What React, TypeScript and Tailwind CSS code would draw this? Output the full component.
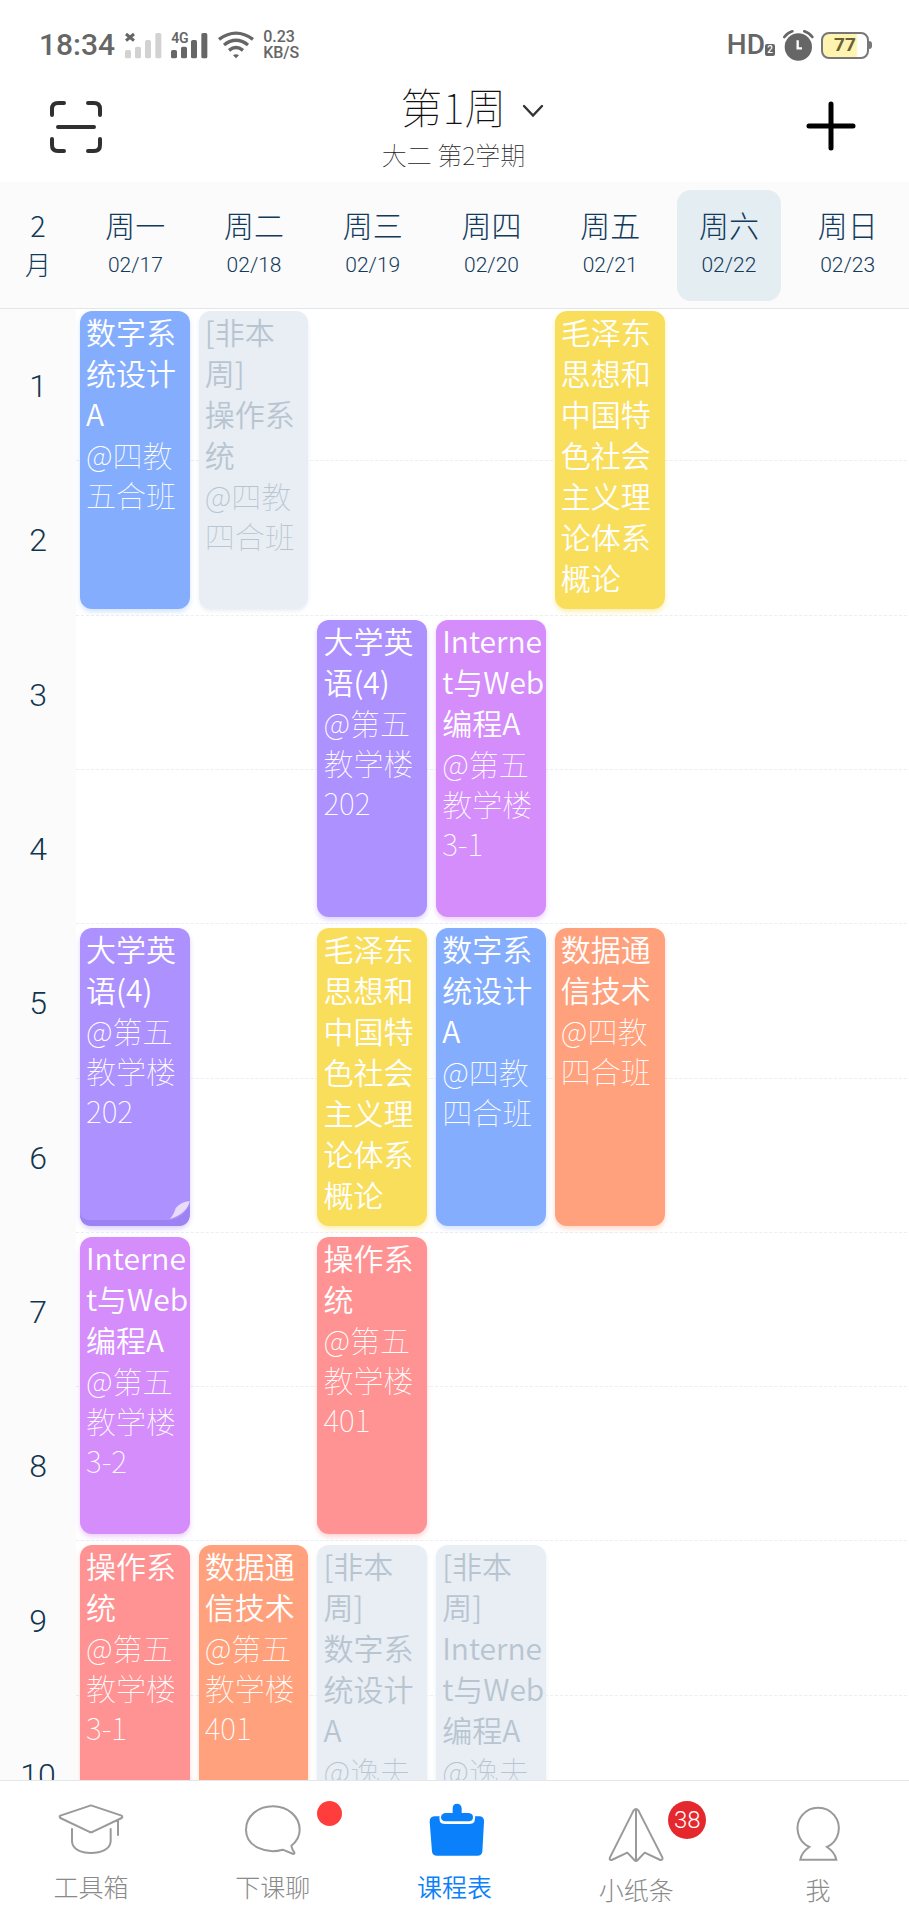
import React from "react";

type Course = {
  day: number;
  start: number;
  title: string;
  place: string;
  tone: keyof typeof tones;
  folded?: boolean;
};

const tones = {
  blue: "bg-[#84adfd] text-white shadow-[0_3px_5px_#84adfd55]",
  yellow: "bg-[#f9de5c] text-white shadow-[0_3px_5px_#f9de5c77]",
  violet: "bg-[#ac91ff] text-white shadow-[0_3px_5px_#ac91ff66]",
  pink: "bg-[#d48dfb] text-white shadow-[0_3px_5px_#d48dfb66]",
  orange: "bg-[#ffa17c] text-white shadow-[0_3px_5px_#ffa17c66]",
  red: "bg-[#ff9293] text-white shadow-[0_3px_5px_#ff929366]",
  muted: "bg-[#e8eef4] text-[#b8c5d1] shadow-[0_2px_4px_#e8eef4]",
};

const columns = ["col-start-2", "col-start-3", "col-start-4", "col-start-5", "col-start-6", "col-start-7", "col-start-8"];
const rows = [
  "row-start-1",
  "row-start-2",
  "row-start-3",
  "row-start-4",
  "row-start-5",
  "row-start-6",
  "row-start-7",
  "row-start-8",
  "row-start-9",
  "row-start-10",
];

const mao = "毛泽东\n思想和\n中国特\n色社会\n主义理\n论体系\n概论";

const courses: Course[] = [
  { day: 0, start: 0, title: "数字系\n统设计\nA", place: "@四教\n五合班", tone: "blue" },
  { day: 1, start: 0, title: "[非本\n周]\n操作系\n统", place: "@四教\n四合班", tone: "muted" },
  { day: 4, start: 0, title: mao, place: "", tone: "yellow" },
  { day: 2, start: 2, title: "大学英\n语(4)", place: "@第五\n教学楼\n202", tone: "violet" },
  { day: 3, start: 2, title: "Interne\nt与Web\n编程A", place: "@第五\n教学楼\n3-1", tone: "pink" },
  { day: 0, start: 4, title: "大学英\n语(4)", place: "@第五\n教学楼\n202", tone: "violet", folded: true },
  { day: 2, start: 4, title: mao, place: "", tone: "yellow" },
  { day: 3, start: 4, title: "数字系\n统设计\nA", place: "@四教\n四合班", tone: "blue" },
  { day: 4, start: 4, title: "数据通\n信技术", place: "@四教\n四合班", tone: "orange" },
  { day: 0, start: 6, title: "Interne\nt与Web\n编程A", place: "@第五\n教学楼\n3-2", tone: "pink" },
  { day: 2, start: 6, title: "操作系\n统", place: "@第五\n教学楼\n401", tone: "red" },
  { day: 0, start: 8, title: "操作系\n统", place: "@第五\n教学楼\n3-1", tone: "red" },
  { day: 1, start: 8, title: "数据通\n信技术", place: "@第五\n教学楼\n401", tone: "orange" },
  { day: 2, start: 8, title: "[非本\n周]\n数字系\n统设计\nA", place: "@逸夫", tone: "muted" },
  { day: 3, start: 8, title: "[非本\n周]\nInterne\nt与Web\n编程A", place: "@逸夫", tone: "muted" },
];

const days = [
  ["周一", "02/17"],
  ["周二", "02/18"],
  ["周三", "02/19"],
  ["周四", "02/20"],
  ["周五", "02/21"],
  ["周六", "02/22"],
  ["周日", "02/23"],
];

function StatusBar() {
  return (
    <div className="flex h-[76px] shrink-0 items-end justify-between pr-[37px] pb-[13px] pl-[39px] font-['Roboto',sans-serif] font-medium text-[#666]">
      <div className="flex h-9 items-center">
        <span className="text-[30px] leading-9">18:34</span>
        <svg className="ml-[10px]" width="37" height="27" viewBox="0 0 111 81" aria-hidden="true">
          <path d="M3 6l24 20M27 6L3 26" stroke="#666" strokeWidth="9" />
          <g fill="#d2d2d2">
            <rect x="0" y="54" width="18" height="25" rx="5" />
            <rect x="30" y="44" width="18" height="35" rx="5" />
            <rect x="60" y="24" width="18" height="55" rx="5" />
            <rect x="91" y="3" width="18" height="76" rx="5" />
          </g>
        </svg>
        <div className="relative ml-[9px]">
          <svg width="37" height="27" viewBox="0 0 111 81" fill="#666" aria-hidden="true">
            <rect x="0" y="54" width="18" height="25" rx="5" />
            <rect x="30" y="44" width="18" height="35" rx="5" />
            <rect x="60" y="24" width="18" height="55" rx="5" />
            <rect x="91" y="3" width="18" height="76" rx="5" />
          </svg>
          <span className="absolute top-0 left-0 text-[14px] leading-3 font-semibold">4G</span>
        </div>
        <svg className="ml-[10px]" width="36" height="28" viewBox="0 0 108 84" fill="none" stroke="#666" strokeWidth="10" aria-hidden="true">
          <path d="M3 25Q54-12 105 25M18 42Q54 14 90 42M33 58Q54 41 75 58" />
          <path d="M45 73Q54 66 63 73L54 82Z" fill="#666" stroke="none" />
        </svg>
        <div className="ml-[9px] text-[16px] leading-4">
          <div>0.23</div>
          <div>KB/S</div>
        </div>
      </div>
      <div className="flex h-9 items-center">
        <span className="text-[28px] leading-9">HD</span>
        <span className="mt-[10px] flex h-3 w-[10px] items-center justify-center rounded-[2px] bg-[#666] text-[10px] leading-3 text-white">2</span>
        <svg className="ml-2" width="31" height="31" viewBox="0 0 93 93" aria-hidden="true">
          <circle cx="46" cy="51" r="41" fill="#666" />
          <path d="M4 21Q14 8 28 4M64 4Q78 8 88 21" stroke="#666" strokeWidth="8" fill="none" strokeLinecap="round" />
          <path d="M44 31V55H57" stroke="#fff" strokeWidth="7" fill="none" />
        </svg>
        <div className="ml-[7px] flex h-[27px] w-12 items-center justify-center rounded-[8px] border-2 border-[#777] bg-linear-to-r from-[#fff3b0] from-75% to-white to-80% text-[19px] leading-6 font-bold text-[#66603c]">
          77
        </div>
        <div className="h-2 w-[3px] rounded-r bg-[#777]" />
      </div>
    </div>
  );
}

function Toolbar() {
  return (
    <header className="flex h-[106px] shrink-0 items-center justify-between pr-[50px] pb-[6px] pl-[48px]">
      <button type="button" aria-label="扫一扫" className="w-[56px]">
        <svg width="54" height="54" viewBox="0 0 54 54" fill="none" stroke="#303030" strokeWidth="4" strokeLinecap="round" strokeLinejoin="round" aria-hidden="true">
          <path d="M4 16V10Q4 4 10 4H16M40 4H46Q52 4 52 10V16M4 40V46Q4 52 10 52H16M40 52H46Q52 52 52 46V40M10 28H46" />
        </svg>
      </button>
      <div className="flex flex-col items-center">
        <button type="button" className="flex items-center pl-[38px] text-[42px] leading-[56px] font-thin text-[#111]">
          第1周
          <svg className="mt-[9px] ml-[16px]" width="22" height="14" viewBox="0 0 22 14" fill="none" stroke="#333" strokeWidth="2.4" strokeLinecap="round" aria-hidden="true">
            <path d="M2 2L11 11.500L20 2" />
          </svg>
        </button>
        <div className="text-[25px] leading-10 font-thin whitespace-pre text-[#222]">大二 第2学期</div>
      </div>
      <button type="button" aria-label="添加" className="flex w-[56px] justify-end">
        <svg width="54" height="54" viewBox="0 0 54 54" stroke="#000" strokeWidth="5" strokeLinecap="round" aria-hidden="true">
          <path d="M26 5V49M4 27H48" />
        </svg>
      </button>
    </header>
  );
}

function WeekHeader() {
  return (
    <div className="grid h-[127px] shrink-0 grid-cols-[76px_repeat(7,minmax(0,1fr))] border-b border-[#e3e6e8] bg-[#fbfbfc] pt-2 pr-0.5 pb-[7px] text-center font-light text-[#123a5a]">
      <div className="flex flex-col pt-[14px]">
        <span className="text-[29px] leading-10">2</span>
        <span className="text-[26px] leading-10">月</span>
      </div>
      {days.map(([name, date], i) => (
        <div key={date} className={i === 5 ? "mx-[7px] flex flex-col rounded-[14px] bg-[#e4edf2] pt-[14px]" : "mx-[7px] flex flex-col pt-[14px]"}>
          <span className="text-[30px] leading-10">{name}</span>
          <span className="font-['Roboto',sans-serif] text-[21px] leading-[42px] font-light">{date}</span>
        </div>
      ))}
    </div>
  );
}

function CourseCard({ course }: { course: Course }) {
  return (
    <div className={`${columns[course.day]} ${rows[course.start]} row-span-2 pt-[2px] pr-[5px] pb-[9px] pl-1`}>
      <article className={`relative h-full rounded-[12px] pl-[6px] text-[30px] whitespace-pre ${tones[course.tone]}`}>
        <h2 className="leading-[41px] font-[350]">{course.title}</h2>
        <p className="leading-10 font-thin">{course.place}</p>
        {course.folded && (
          <svg className="absolute bottom-0 left-0 w-full" height="26" viewBox="0 0 110 26" preserveAspectRatio="none" aria-hidden="true">
            <path d="M0 14Q2 20 11 20H90Q104 18 110 4V14Q110 26 98 26H12Q0 26 0 14Z" fill="#9c82f3" />
            <path d="M90 19Q94 15 96 8Q101 2 110 1Q108 13 90 19Z" fill="#e9dcfb" />
          </svg>
        )}
      </article>
    </div>
  );
}

function Timetable() {
  return (
    <main className="min-h-0 flex-1 overflow-y-auto [scrollbar-width:none]">
      <div className="grid h-[1543px] grid-cols-[76px_repeat(7,minmax(0,1fr))] grid-rows-10 pr-0.5">
        {rows.map((row, i) => (
          <React.Fragment key={row}>
            <div className={`${row} col-start-1 flex items-center justify-center bg-[#fbfbfc] font-['Roboto',sans-serif] text-[32px] font-light text-[#12354e]`}>{i + 1}</div>
            <div className={`${row} col-span-7 col-start-2 pb-[2px]`}>
              <div className="h-full border-b border-dashed border-[#e9eff2]" />
            </div>
          </React.Fragment>
        ))}
        {courses.map((c) => (
          <CourseCard key={`${c.day}-${c.start}`} course={c} />
        ))}
      </div>
    </main>
  );
}

const tabClass = "relative flex flex-1 flex-col items-center";

function TabBar() {
  return (
    <nav className="flex h-[140px] shrink-0 border-t border-[#e4e6e8] bg-white text-[25px] leading-9 font-light text-[#8a8a8a]">
      <a href="#tools" className={`${tabClass} pt-[22px]`}>
        <svg width="68" height="56" viewBox="168 100 204 168" fill="none" stroke="#9a9a9a" strokeWidth="6" strokeLinecap="round" strokeLinejoin="round" aria-hidden="true">
          <path d="M270 107L362 138Q366 142 362 145L276 186Q270 190 264 186L178 145Q174 141 178 138ZM213 178V215C214 239 240 250 270 250S328 239 329 215V178M351 151V196" />
        </svg>
        <span className="mt-[9px]">工具箱</span>
      </a>
      <a href="#chat" className={`${tabClass} pt-[22px]`}>
        <svg width="60" height="56" viewBox="729 100 180 168" fill="none" stroke="#9a9a9a" strokeWidth="6" strokeLinejoin="round" aria-hidden="true">
          <path d="M848 240C800 254 738 232 738 180C738 139 774 110 819 110S899 141 899 180C899 199 889 216 874 228Q876 240 883 248Q884 253 880 253Z" />
        </svg>
        <span className="absolute top-[20px] left-1/2 ml-[44px] size-[25px] rounded-full bg-[#ff3d3d]" />
        <span className="mt-[9px]">下课聊</span>
      </a>
      <a href="#schedule" aria-current="page" className={`${tabClass} pt-[22px] font-[350] text-[#0a80fb]`}>
        <svg width="62" height="56" viewBox="-18 0 186 168" aria-hidden="true">
          <path d="M16 40H153Q166 42 165 56L160 146Q158 158 145 158H24Q11 158 9 146L2 56Q2 41 16 40Z" fill="#0a80fb" />
          <path d="M33 32Q25 63 48 63H120Q144 63 137 32Z" fill="#fff" />
          <path d="M71 30V16Q71 2 84 2T98 16V30H119Q132 31 132 43T119 55H49Q36 54 36 43T49 30Z" fill="#0a80fb" />
        </svg>
        <span className="mt-[9px]">课程表</span>
      </a>
      <a href="#notes" className={`${tabClass} pt-[25px]`}>
        <svg width="60" height="56" viewBox="456 110 180 168" fill="none" stroke="#9a9a9a" strokeWidth="6" strokeLinejoin="round" aria-hidden="true">
          <path d="M539 123Q546 116 553 123L625 264Q627 273 619 272L572 250L551 272Q546 277 541 272L520 250L473 272Q465 273 468 264ZM546 120V274" />
        </svg>
        <span className="absolute top-[20px] left-1/2 ml-[32px] flex size-[38px] items-center justify-center rounded-full bg-[#e4282d] font-['Roboto',sans-serif] text-[24px] text-white">38</span>
        <span className="mt-[9px]">小纸条</span>
      </a>
      <a href="#me" className={`${tabClass} pt-[25px]`}>
        <svg width="48" height="56" viewBox="1022 118 144 168" fill="none" stroke="#9a9a9a" strokeWidth="6" aria-hidden="true">
          <path d="M1068 241A62 62 0 1 1 1121 241Q1144 256 1149 279H1041Q1045 256 1068 241Z" />
        </svg>
        <span className="mt-[9px]">我</span>
      </a>
    </nav>
  );
}

export default function App() {
  return (
    <div className="flex h-screen flex-col overflow-hidden bg-white font-['Noto_Sans_CJK_SC',sans-serif]">
      <StatusBar />
      <Toolbar />
      <WeekHeader />
      <Timetable />
      <TabBar />
    </div>
  );
}
